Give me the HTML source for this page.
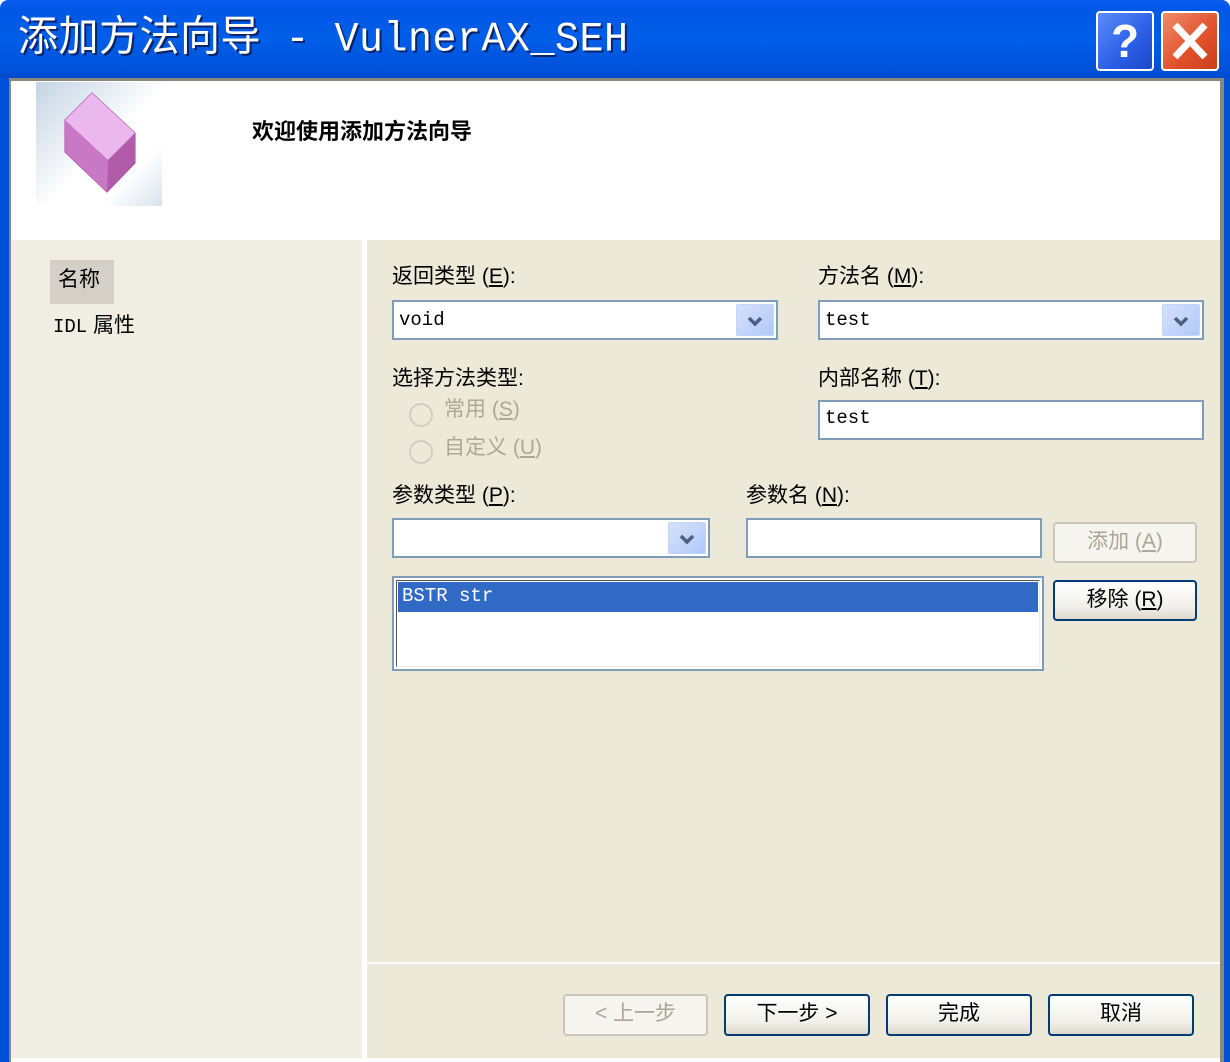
<!DOCTYPE html>
<html><head><meta charset="utf-8"><style>
*{margin:0;padding:0;box-sizing:border-box}
body{width:1230px;height:1062px;overflow:hidden;background:#fff;position:relative;font-family:"Liberation Sans","Noto Sans CJK SC","WenQuanYi Zen Hei",sans-serif}
.a{position:absolute}
.lbl{position:absolute;font-size:21px;color:#000;white-space:nowrap;line-height:24px}
.lbl u{text-decoration:underline}
.box{position:absolute;background:#fff;border:2px solid #7f9db9}
.mono{font-family:"Liberation Mono","Noto Sans CJK SC",monospace;font-size:19px;color:#000}
.arrow{position:absolute;right:2px;top:2px;bottom:2px;width:38px;background:linear-gradient(135deg,#d6e2fc,#b0c8f8);border:1px solid #c4d4f8;border-radius:2px}
.btn{position:absolute;border:2px solid #003c74;border-radius:4px;background:linear-gradient(#fff,#f0efe8 70%,#dcd8cc);font-size:21px;text-align:center;color:#000;line-height:36px}
.dis{border-color:#c9c7ba;color:#a8a697;background:#f5f4ee}
.radio{position:absolute;width:24px;height:24px;border-radius:50%;border:2px solid #d0cec2;background:#ece9d8}
</style></head><body>
<!-- title bar -->
<div class="a" style="left:0;top:0;width:1230px;height:80px;background:linear-gradient(#0a5cf0 0%,#0058e6 10%,#005ee8 50%,#0050d8 90%,#0048c8);border-radius:8px 8px 0 0"></div>
<div class="a" style="left:18px;top:18px;color:#fff;font-family:'Liberation Mono','Noto Sans CJK SC',monospace;font-size:40px;line-height:46px;letter-spacing:0.5px;text-shadow:2px 2px 0 #0a246a;white-space:nowrap;transform:scaleY(1.05)">添加方法向导 - VulnerAX_SEH</div>
<div class="a" style="left:1096px;top:11px;width:58px;height:60px;border:2px solid #fff;border-radius:4px;background:linear-gradient(135deg,#5a8cf8,#2a5ee6 60%,#1c48c8);color:#fff;font:bold 46px 'Liberation Sans',sans-serif;text-align:center;line-height:56px">?</div>
<div class="a" style="left:1161px;top:11px;width:58px;height:60px;border:2px solid #fff;border-radius:4px;background:linear-gradient(135deg,#f08a6a,#e0502a 60%,#c8401c)">
<svg width="54" height="56" viewBox="0 0 54 56"><path d="M12 12L42 44M42 12L12 44" stroke="#fff" stroke-width="7"/></svg></div>
<!-- borders -->
<div class="a" style="left:0;top:78px;width:9px;height:984px;background:#0050d8"></div>
<div class="a" style="left:9px;top:78px;width:2px;height:984px;background:#8a8878"></div>
<div class="a" style="left:1224px;top:78px;width:6px;height:984px;background:#0050d8"></div>
<div class="a" style="left:1220px;top:78px;width:4px;height:984px;background:#8a8878"></div>
<div class="a" style="left:9px;top:78px;width:1212px;height:3px;background:#8a8878"></div>
<!-- header -->
<div class="a" style="left:11px;top:81px;width:1209px;height:159px;background:#fff"></div>
<div class="a" style="left:36px;top:82px;width:126px;height:124px;background:linear-gradient(135deg,#c4d4e4 0%,#fff 55%,#fff 75%,#d8e2ec 100%)"></div>
<svg class="a" style="left:36px;top:82px" width="126" height="124" viewBox="36 82 126 124">
<polygon points="92,93 135,133 135,163 107,192 65,152 65,120" fill="#d890d4" stroke="#a04098" stroke-width="1"/>
<polygon points="92,93 135,133 108,160 65,120" fill="#eab8ec"/>
<polygon points="65,120 108,160 107,192 65,152" fill="#c878c4"/>
<polygon points="108,160 135,133 135,163 107,192" fill="#b05ca8"/>
</svg>
<div class="a" style="left:252px;top:114px;font-size:22px;font-weight:bold;color:#000">欢迎使用添加方法向导</div>
<!-- left panel -->
<div class="a" style="left:11px;top:240px;width:351px;height:818px;background:#f0eee2"></div>
<div class="a" style="left:362px;top:240px;width:5px;height:818px;background:#fff"></div>
<div class="a" style="left:367px;top:240px;width:853px;height:818px;background:#ece9d8"></div>
<div class="a" style="left:50px;top:260px;width:64px;height:44px;background:#d4d0c8"></div>
<div class="lbl" style="left:58px;top:268px">名称</div>
<div class="lbl" style="left:53px;top:314px"><span class="mono" style="font-size:19px">IDL</span> 属性</div>
<!-- form -->
<div class="lbl" style="left:392px;top:265px">返回类型 (<u>E</u>):</div>
<div class="box" style="left:392px;top:300px;width:386px;height:40px"><span class="mono a" style="left:5px;top:7px">void</span><div class="arrow"><svg width="36" height="34"><path d="M12 13l6 6 6-6" stroke="#4d6185" stroke-width="3.5" fill="none"/></svg></div></div>
<div class="lbl" style="left:818px;top:265px">方法名 (<u>M</u>):</div>
<div class="box" style="left:818px;top:300px;width:386px;height:40px"><span class="mono a" style="left:5px;top:7px">test</span><div class="arrow"><svg width="36" height="34"><path d="M12 13l6 6 6-6" stroke="#4d6185" stroke-width="3.5" fill="none"/></svg></div></div>
<div class="lbl" style="left:392px;top:367px">选择方法类型:</div>
<div class="radio" style="left:409px;top:403px"></div>
<div class="lbl" style="left:444px;top:398px;color:#aca899">常用 (<u>S</u>)</div>
<div class="radio" style="left:409px;top:440px"></div>
<div class="lbl" style="left:444px;top:436px;color:#aca899">自定义 (<u>U</u>)</div>
<div class="lbl" style="left:818px;top:367px">内部名称 (<u>T</u>):</div>
<div class="box" style="left:818px;top:400px;width:386px;height:40px"><span class="mono a" style="left:5px;top:5px">test</span></div>
<div class="lbl" style="left:392px;top:484px">参数类型 (<u>P</u>):</div>
<div class="box" style="left:392px;top:518px;width:318px;height:40px"><div class="arrow"><svg width="36" height="34"><path d="M12 13l6 6 6-6" stroke="#4d6185" stroke-width="3.5" fill="none"/></svg></div></div>
<div class="lbl" style="left:746px;top:484px">参数名 (<u>N</u>):</div>
<div class="box" style="left:746px;top:518px;width:296px;height:40px"></div>
<div class="btn dis" style="left:1053px;top:522px;width:144px;height:41px">添加 (<u>A</u>)</div>
<div class="box" style="left:392px;top:576px;width:652px;height:95px;border-width:2px"><div class="a" style="left:2px;top:2px;right:2px;bottom:2px;border:1px solid #555;border-right-color:#eee;border-bottom-color:#eee"></div>
<div class="a" style="left:4px;top:4px;right:4px;height:30px;background:#316ac5"><span class="mono a" style="left:4px;top:3px;color:#fff">BSTR str</span></div></div>
<div class="btn" style="left:1053px;top:580px;width:144px;height:41px">移除 (<u>R</u>)</div>
<!-- bottom -->
<div class="a" style="left:367px;top:962px;width:853px;height:2px;background:#fff"></div>
<div class="btn dis" style="left:563px;top:994px;width:145px;height:42px">&lt; 上一步</div>
<div class="btn" style="left:724px;top:994px;width:146px;height:42px">下一步 &gt;</div>
<div class="btn" style="left:886px;top:994px;width:146px;height:42px">完成</div>
<div class="btn" style="left:1048px;top:994px;width:146px;height:42px">取消</div>
<div class="a" style="left:11px;top:1058px;width:1209px;height:4px;background:#fff"></div>
</body></html>
